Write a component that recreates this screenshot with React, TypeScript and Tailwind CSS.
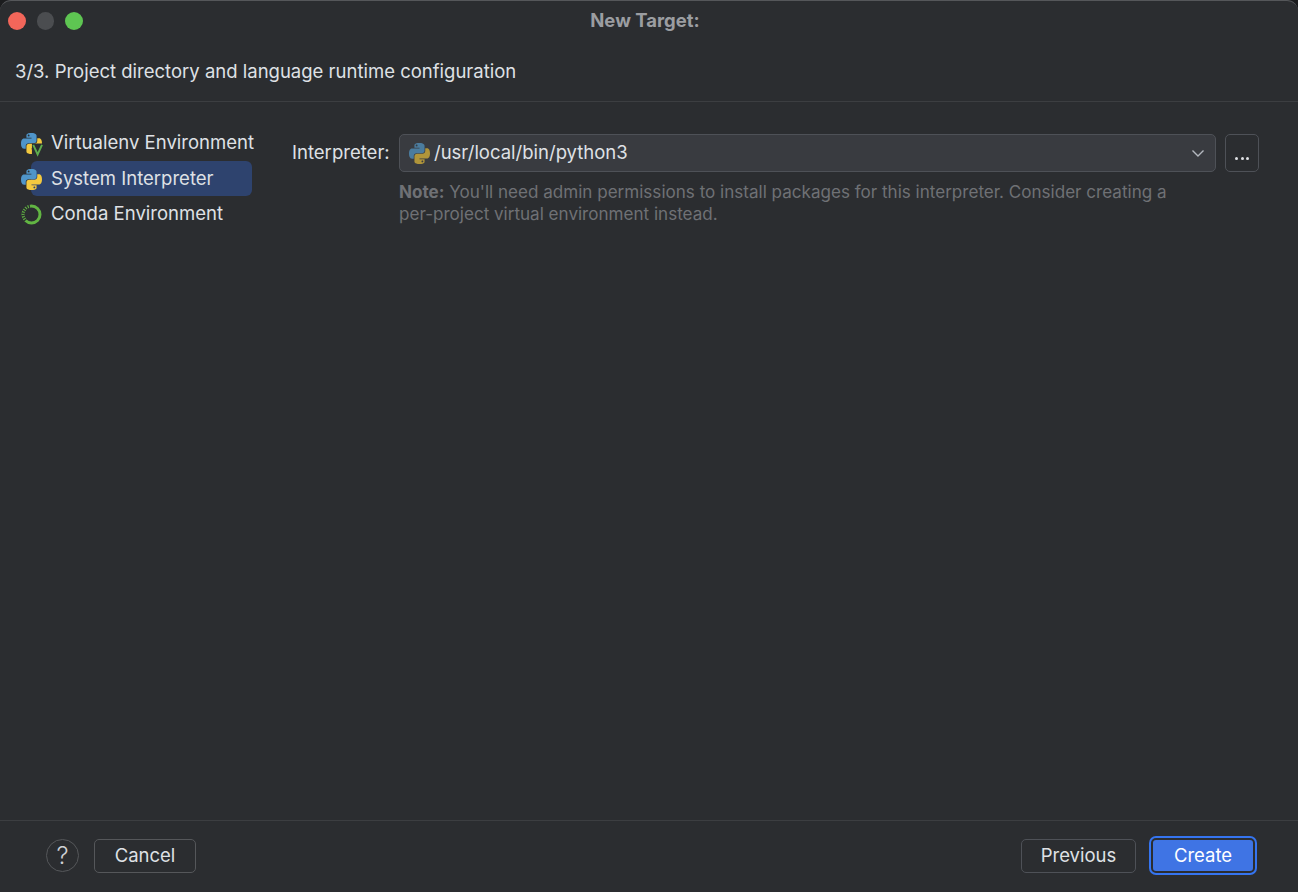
import React from "react";

const BLUE = "M11.914 0C5.82 0 6.2 2.656 6.2 2.656l.007 2.752h5.814v.826H3.9S0 5.789 0 11.969c0 6.18 3.403 5.96 3.403 5.96h2.03v-2.867s-.109-3.42 3.35-3.42h5.766s3.24.052 3.24-3.148V3.202S18.28 0 11.913 0zM8.708 1.85c.578 0 1.046.47 1.046 1.052 0 .581-.468 1.051-1.046 1.051-.579 0-1.046-.47-1.046-1.051 0-.582.467-1.052 1.046-1.052z";
const YELLOW = "M12.087 24c6.092 0 5.712-2.656 5.712-2.656l-.007-2.752h-5.814v-.826h8.123s3.9.445 3.9-5.735c0-6.18-3.404-5.96-3.404-5.96h-2.03v2.867s.109 3.42-3.35 3.42H9.45s-3.24-.052-3.24 3.148v5.292S5.72 24 12.087 24zm3.206-1.85c-.578 0-1.046-.47-1.046-1.052 0-.581.468-1.051 1.046-1.051.579 0 1.046.47 1.046 1.051 0 .582-.467 1.052-1.046 1.052z";

function Py({ dim, v }: { dim?: boolean; v?: boolean }) {
  return (
    <svg width="21" height="21" viewBox="0 0 24 24" className="shrink-0 overflow-visible">
      <path d={BLUE} fill={dim ? "#4b7c9e" : "#4f95c9"} />
      <path d={YELLOW} fill={dim ? "#b0953a" : "#f3c93f"} />
      {v && (
        <>
          <rect x="12.500" y="12" width="12.500" height="13" fill="#2b2d30" />
          <path d="M14 13.500l5 11L24 13.500" fill="none" stroke="#5fad4e" strokeWidth="2.200" />
        </>
      )}
    </svg>
  );
}

function Conda() {
  return (
    <svg width="21" height="21" viewBox="0 0 21 21" className="shrink-0">
      <circle cx="10.500" cy="10.500" r="8.500" fill="none" stroke="#62b543" strokeWidth="3" />
      <path d="M4.500 16.500A8.500 8.500 0 0 1 9 2.200" fill="none" stroke="#2b2d30" strokeWidth="3.200" strokeDasharray="1.300 1.100" />
    </svg>
  );
}

export default function App() {
  return (
    <div className="w-[1298px] h-[892px] bg-[#1b1c1e] overflow-hidden font-['Inter','Liberation_Sans',sans-serif] text-[#dfe1e5]">
      <div className="w-full h-full rounded-t-[11px] bg-[#2b2d30] border-t border-[#55575a] flex flex-col">
        <div className="h-[40px] shrink-0 flex items-center pl-[8px] relative">
          <div className="flex gap-[11px]">
            <span className="w-[17.5px] h-[17.5px] rounded-full bg-[#f2665a]" />
            <span className="w-[17.5px] h-[17.5px] rounded-full bg-[#4b4d50]" />
            <span className="w-[17.5px] h-[17.5px] rounded-full bg-[#5ec552]" />
          </div>
          <div className="absolute inset-x-0 top-0 h-[39px] flex items-center justify-center pr-[8px] text-[18.5px] font-bold text-[#9b9da1]">New Target:</div>
        </div>
        <div className="h-[61px] shrink-0 border-b border-[#3c3e41] pl-[15px] pt-[19px] text-[18.5px] leading-[22px]">
          3/3. Project directory and language runtime configuration
        </div>
        <div className="flex-1 flex min-h-0">
          <div className="w-[292px] shrink-0 pl-[21px] pt-[23px] text-[18.55px]">
            <div className="h-[36px] flex items-center gap-[9px]"><Py v />Virtualenv Environment</div>
            <div className="h-[36px] relative flex items-center">
              <div className="absolute left-[10px] top-0 w-[221px] h-[35px] rounded-[6px] bg-[#2e436e]" />
              <div className="relative flex items-center gap-[9px]"><Py />System Interpreter</div>
            </div>
            <div className="h-[34px] flex items-center gap-[9px]"><Conda />Conda Environment</div>
          </div>
          <div className="flex-1 pt-[32px]">
            <div className="flex items-center">
              <div className="w-[107px] text-[18.55px]">Interpreter:</div>
              <div className="w-[817px] h-[38px] rounded-[5px] border border-[#4e5157] bg-[#393b40] flex items-center pl-[9px] pr-[10px] gap-[4px] text-[18.5px]">
                <Py dim />
                <span className="flex-1">/usr/local/bin/python3</span>
                <svg width="14" height="14" viewBox="0 0 14 14"><path d="M1.500 4.500L7 10l5.500-5.500" fill="none" stroke="#b4b8bf" strokeWidth="1.400" /></svg>
              </div>
              <div className="ml-[9px] w-[34px] h-[38px] rounded-[5px] border border-[#4e5157] flex items-end justify-center pb-[11px] gap-[2.5px]">
                <span className="w-[3px] h-[3px] rounded-full bg-[#dfe1e5]" />
                <span className="w-[3px] h-[3px] rounded-full bg-[#dfe1e5]" />
                <span className="w-[3px] h-[3px] rounded-full bg-[#dfe1e5]" />
              </div>
            </div>
            <div className="ml-[107px] mt-[9px] whitespace-nowrap text-[17.07px] leading-[22px] text-[#6f7175]">
              <b className="font-bold">Note:</b> You'll need admin permissions to install packages for this interpreter. Consider creating a<br />per-project virtual environment instead.
            </div>
          </div>
        </div>
        <div className="h-[72px] shrink-0 border-t border-[#3c3e41] flex items-center pl-[46px] pr-[41px] pb-[2px] text-[18.5px]">
          <div className="w-[33px] h-[33px] rounded-full border border-[#55575a] flex items-center justify-center text-[#cfd1d5] text-[24px] font-light">?</div>
          <div className="ml-[15px] w-[102px] h-[34px] rounded-[5px] border border-[#55575a] flex items-center justify-center">Cancel</div>
          <div className="ml-auto w-[115px] h-[34px] rounded-[5px] border border-[#4e5157] flex items-center justify-center">Previous</div>
          <div className="ml-[13px] w-[108px] h-[39px] rounded-[7px] bg-[#3574f0] p-[2px]">
            <div className="w-full h-full rounded-[5px] border-2 border-[#2b2d30] bg-[#3f74e4] flex items-center justify-center text-white">Create</div>
          </div>
        </div>
      </div>
    </div>
  );
}
